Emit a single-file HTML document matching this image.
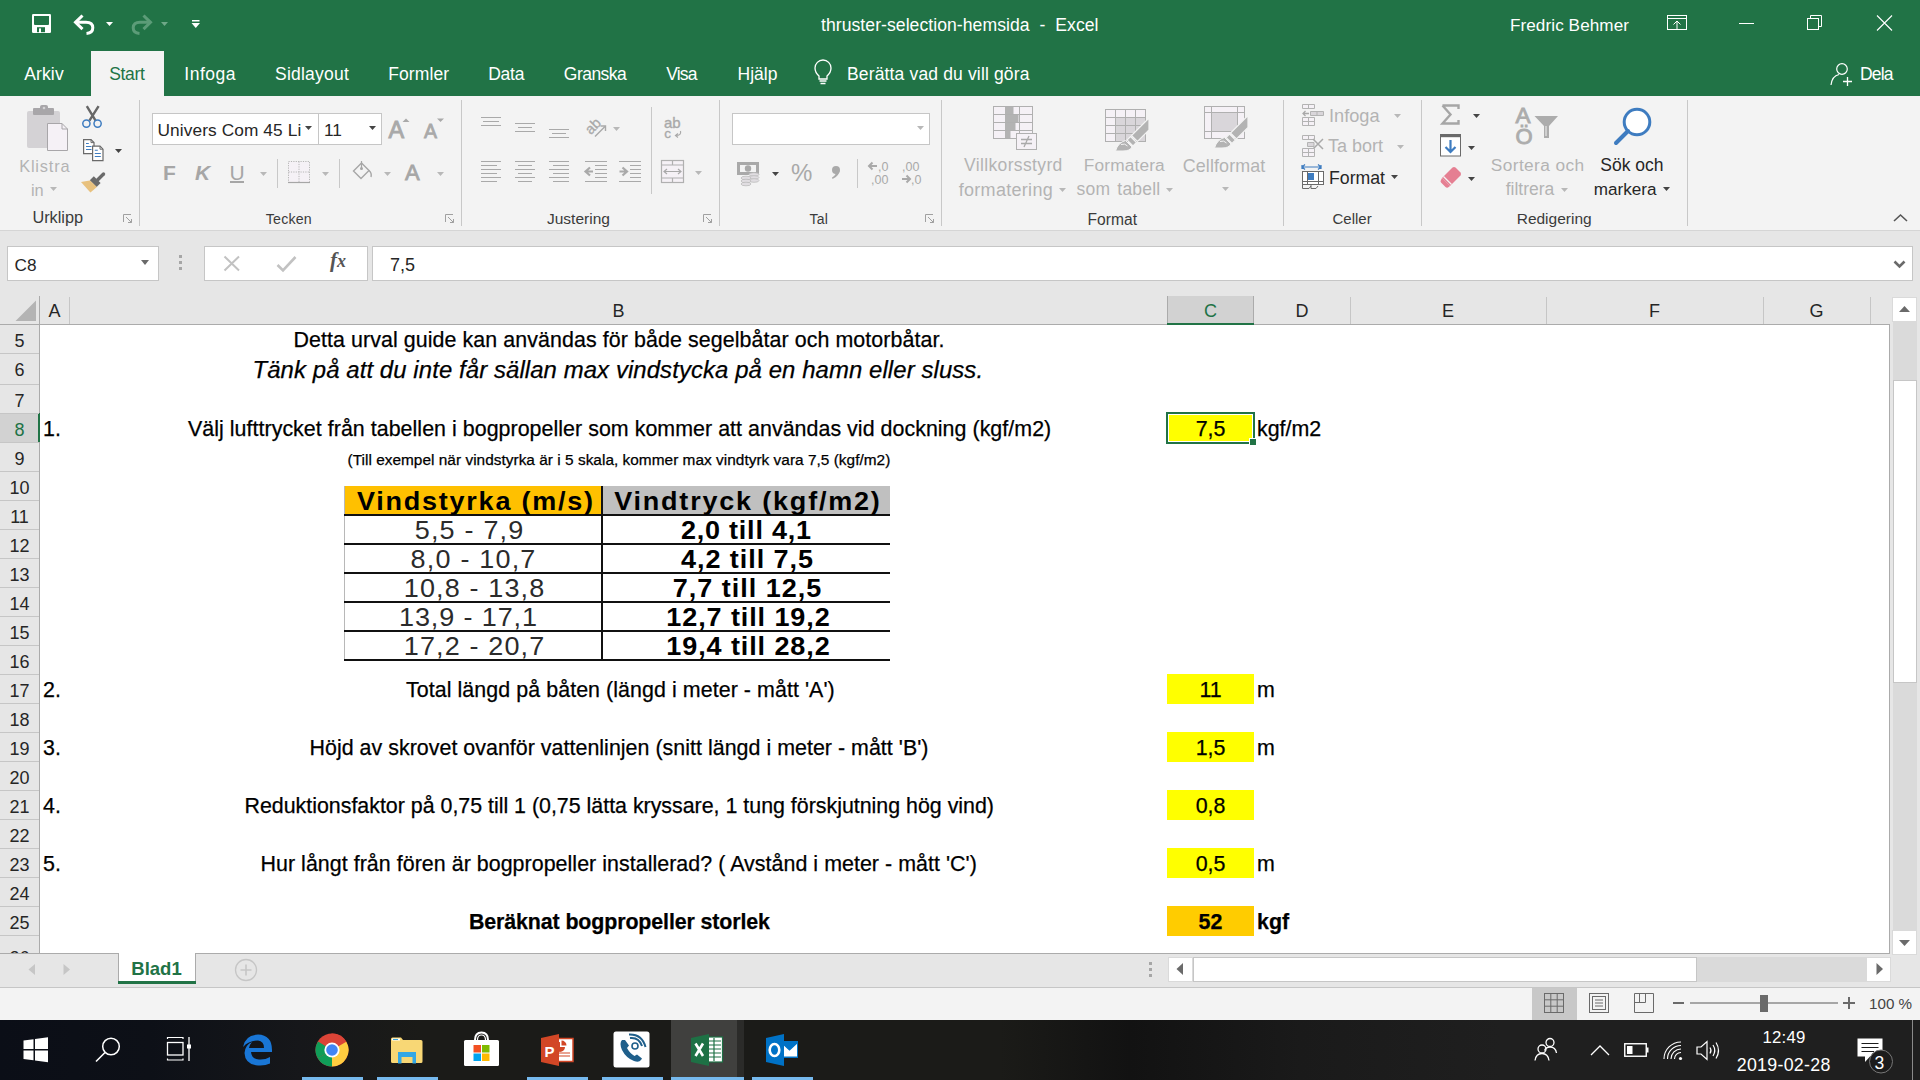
<!DOCTYPE html>
<html><head><meta charset="utf-8">
<style>
*{margin:0;padding:0;box-sizing:border-box}
html,body{width:1920px;height:1080px;overflow:hidden;background:#fff;font-family:"Liberation Sans",sans-serif}
.a{position:absolute}
.t{position:absolute;white-space:nowrap;line-height:1}
svg{position:absolute;overflow:visible}
#title{left:0;top:0;width:1920px;height:96px;background:#217346}
#ribbon{left:0;top:96px;width:1920px;height:134px;background:#f3f3f3}
#rbb{left:0;top:230px;width:1920px;height:1px;background:#d5d5d5}
#fbar{left:0;top:231px;width:1920px;height:65px;background:#e6e6e6}
#colhdr{left:0;top:296px;width:1890px;height:28px;background:#e6e6e6}
#chb{left:0;top:324px;width:1890px;height:1px;background:#ababab}
#rowhdr{left:0;top:325px;width:39px;height:628px;background:#e6e6e6}
#rhb{left:39px;top:296px;width:1px;height:657px;background:#ababab}
#sheet{left:40px;top:325px;width:1849px;height:628px;background:#fff}
#vscroll{left:1889px;top:296px;width:31px;height:692px;background:#e6e6e6}
#tabbar{left:0;top:953px;width:1889px;height:34px;background:#e6e6e6}
#status{left:0;top:988px;width:1920px;height:32px;background:#f3f3f3}
#taskbar{left:0;top:1020px;width:1920px;height:60px;background:linear-gradient(90deg,#0b0e17 0px,#0d1017 150px,#16171a 300px,#1b1b18 420px,#1b1b18 1000px,#121212 1130px,#1a1a1a 1300px,#1f1f1f 1500px,#1f1f1f 1920px)}
.tab{color:#fff;font-size:18px}
.hd{font-size:18px;color:#262626}
.rn{font-size:18px;color:#262626;width:39px;text-align:center}
.cell{font-size:21.4px;color:#000;-webkit-text-stroke:0.25px #000}
.gl{font-size:16px;color:#444}
.dis{color:#b1b1b1}
.blk{color:#262626}
</style></head><body>
<div id="title" class="a"></div>
<div id="ribbon" class="a"></div>
<div id="rbb" class="a"></div>
<div id="fbar" class="a"></div>
<div id="colhdr" class="a"></div>
<div id="chb" class="a"></div>
<div id="rowhdr" class="a"></div>
<div id="sheet" class="a"></div>
<div id="rhb" class="a"></div>
<div id="vscroll" class="a"></div>
<div id="tabbar" class="a"></div>
<div id="status" class="a"></div>
<div id="taskbar" class="a"></div>



<!-- ===== RIBBON ===== -->
<div class="a" style="left:139px;top:100px;width:1px;height:126px;background:#c8c8c8"></div>
<div class="a" style="left:461px;top:100px;width:1px;height:126px;background:#c8c8c8"></div>
<div class="a" style="left:719px;top:100px;width:1px;height:126px;background:#c8c8c8"></div>
<div class="a" style="left:941px;top:100px;width:1px;height:126px;background:#c8c8c8"></div>
<div class="a" style="left:1283px;top:100px;width:1px;height:126px;background:#c8c8c8"></div>
<div class="a" style="left:1421px;top:100px;width:1px;height:126px;background:#c8c8c8"></div>
<div class="a" style="left:1687px;top:100px;width:1px;height:126px;background:#c8c8c8"></div>
<div class="a" style="left:277px;top:159px;width:1px;height:29px;background:#c8c8c8"></div>
<div class="a" style="left:339px;top:159px;width:1px;height:29px;background:#c8c8c8"></div>
<div class="a" style="left:651px;top:107px;width:1px;height:87px;background:#c8c8c8"></div>
<div class="a" style="left:857px;top:159px;width:1px;height:29px;background:#c8c8c8"></div>
<div class="t" style="left:32.4px;top:209.3px;font-size:16.3px;color:#3b3b3b;">Urklipp</div>
<div class="t" style="left:265.8px;top:212.0px;font-size:14.2px;color:#3b3b3b;letter-spacing:0.2px">Tecken</div>
<div class="t" style="left:547px;top:210.9px;font-size:15.5px;color:#3b3b3b;">Justering</div>
<div class="t" style="left:809.4px;top:211.8px;font-size:14px;color:#3b3b3b;letter-spacing:0.3px">Tal</div>
<div class="t" style="left:1087.6px;top:211.9px;font-size:15.6px;color:#3b3b3b;">Format</div>
<div class="t" style="left:1332.5px;top:211.0px;font-size:15px;color:#3b3b3b;">Celler</div>
<div class="t" style="left:1516.7px;top:210.6px;font-size:15.5px;color:#3b3b3b;">Redigering</div>
<svg style="left:123px;top:214px" width="10" height="10"><path d="M0.5 8 V0.5 H8" fill="none" stroke="#a0a0a0" stroke-width="1"/><path d="M3 3 L8.5 8.5 M5 8.5 H8.5 V5" fill="none" stroke="#a0a0a0" stroke-width="1"/></svg>
<svg style="left:445px;top:214px" width="10" height="10"><path d="M0.5 8 V0.5 H8" fill="none" stroke="#a0a0a0" stroke-width="1"/><path d="M3 3 L8.5 8.5 M5 8.5 H8.5 V5" fill="none" stroke="#a0a0a0" stroke-width="1"/></svg>
<svg style="left:703px;top:214px" width="10" height="10"><path d="M0.5 8 V0.5 H8" fill="none" stroke="#a0a0a0" stroke-width="1"/><path d="M3 3 L8.5 8.5 M5 8.5 H8.5 V5" fill="none" stroke="#a0a0a0" stroke-width="1"/></svg>
<svg style="left:925px;top:214px" width="10" height="10"><path d="M0.5 8 V0.5 H8" fill="none" stroke="#a0a0a0" stroke-width="1"/><path d="M3 3 L8.5 8.5 M5 8.5 H8.5 V5" fill="none" stroke="#a0a0a0" stroke-width="1"/></svg>
<svg style="left:1892px;top:212px" width="18" height="12"><path d="M2 9 L8.5 3 L15 9" fill="none" stroke="#555" stroke-width="1.6"/></svg>
<svg style="left:26px;top:105px" width="44" height="48">
<rect x="1" y="6" width="33" height="37" rx="2" fill="#d4d2d5"/>
<rect x="7" y="3" width="21" height="7" rx="1" fill="#a8a6a9"/>
<rect x="14" y="0" width="8" height="5" rx="2" fill="#a8a6a9"/><circle cx="18" cy="3" r="1.3" fill="#d4d2d5"/>
<path d="M21.5 18.5 H36 L41.5 24 V45.5 H21.5 Z" fill="#f5f1f6" stroke="#a8a6a9" stroke-width="1"/>
<path d="M36 18.5 V24 H41.5" fill="none" stroke="#a8a6a9" stroke-width="1"/>
</svg>
<div class="t" style="left:19.2px;top:157.7px;font-size:16.4px;color:#b3b3b3;letter-spacing:0.8px">Klistra</div>
<div class="t" style="left:30.9px;top:181.7px;font-size:16.4px;color:#b3b3b3;">in</div>
<svg style="left:50px;top:187px" width="8" height="5"><path d="M0 0 H7 L3.5 4 Z" fill="#b8b8b8"/></svg>
<svg style="left:76px;top:100px" width="32" height="32">
<path d="M10.8 6.2 L19.6 20.6 M22.6 6.2 L13.4 20.6" stroke="#666" stroke-width="2.4"/>
<circle cx="10.4" cy="23.6" r="3.6" fill="none" stroke="#3e7cc0" stroke-width="1.5"/>
<circle cx="21.6" cy="23.6" r="3.6" fill="none" stroke="#3e7cc0" stroke-width="1.5"/>
</svg>
<svg style="left:76px;top:100px" width="32" height="64">
<path d="M7.6 39.6 H15 L18 42.6 V53.6 H7.6 Z" fill="#fff" stroke="#6a6a6a" stroke-width="1.2"/>
<path d="M15 39.6 V42.6 H18" fill="none" stroke="#6a6a6a" stroke-width="1"/>
<path d="M10 43.5 H12.8 M10 46.5 H15.5 M10 49.5 H15.5" stroke="#3e7cc0" stroke-width="1.1"/>
<path d="M16.6 46.2 H24 L27 49.2 V60.6 H16.6 Z" fill="#fff" stroke="#6a6a6a" stroke-width="1.2"/>
<path d="M24 46.2 V49.2 H27" fill="none" stroke="#6a6a6a" stroke-width="1"/>
<path d="M18.8 50.3 H21.8 M18.8 53.5 H24.8 M18.8 56.5 H24.8" stroke="#3e7cc0" stroke-width="1.1"/>
</svg>
<svg style="left:115px;top:149px" width="8" height="5"><path d="M0 0 H7 L3.5 4 Z" fill="#444"/></svg>
<svg style="left:76px;top:170px" width="32" height="26">
<path d="M22 9.5 L27.5 4" stroke="#6a6a6a" stroke-width="3.4" stroke-linecap="round"/>
<path d="M13.8 10.2 L17.8 6.2 L24.6 13 L20.6 17 Z" fill="#6a6a6a"/>
<path d="M5 12 Q9 11.2 14 10.5 L20.8 17 Q17.5 20 14.4 22.6 Z" fill="#e8c17e"/>
</svg>
<div class="a" style="left:152px;top:113px;width:230px;height:32px;background:#fff;border:1px solid #c6c6c6"></div>
<div class="a" style="left:318px;top:114px;width:1px;height:30px;background:#c6c6c6"></div>
<div class="t" style="left:157.5px;top:122.4px;font-size:17.3px;color:#262626;letter-spacing:0.1px">Univers Com 45 Li</div>
<div class="t" style="left:324.0px;top:122.4px;font-size:17.3px;color:#262626;">11</div>
<svg style="left:305px;top:126px" width="8" height="5"><path d="M0 0 H7 L3.5 4 Z" fill="#444"/></svg>
<svg style="left:369px;top:126px" width="8" height="5"><path d="M0 0 H7 L3.5 4 Z" fill="#444"/></svg>
<svg style="left:388px;top:116px" width="60" height="24">
<text x="0.5" y="21.6" font-family="Liberation Sans" font-size="23.5" fill="#a9a9a9" stroke="#a9a9a9" stroke-width="0.9">A</text>
<path d="M14.5 6 L18 2.5 L21.5 6 Z" fill="#a9a9a9"/>
<text x="36" y="21.6" font-family="Liberation Sans" font-size="19.5" fill="#a9a9a9" stroke="#a9a9a9" stroke-width="0.8">A</text>
<path d="M49 2.5 H56 L52.5 6 Z" fill="#a9a9a9"/>
</svg>
<div class="t" style="left:163px;top:162.2px;font-size:21px;color:#a6a6a6;font-weight:bold">F</div>
<div class="t" style="left:195px;top:162.2px;font-size:21px;color:#a6a6a6;font-weight:bold;font-style:italic">K</div>
<div class="t" style="left:229.5px;top:162.2px;font-size:21px;color:#a6a6a6;">U</div>
<div class="a" style="left:230px;top:181px;width:14px;height:1.5px;background:#a6a6a6"></div>
<svg style="left:260px;top:172px" width="8" height="5"><path d="M0 0 H7 L3.5 4 Z" fill="#b8b8b8"/></svg>
<svg style="left:322px;top:172px" width="8" height="5"><path d="M0 0 H7 L3.5 4 Z" fill="#b8b8b8"/></svg>
<svg style="left:384px;top:172px" width="8" height="5"><path d="M0 0 H7 L3.5 4 Z" fill="#b8b8b8"/></svg>
<svg style="left:437px;top:172px" width="8" height="5"><path d="M0 0 H7 L3.5 4 Z" fill="#b8b8b8"/></svg>
<svg style="left:288px;top:161px" width="22" height="22">
<rect x="0.5" y="0.5" width="21" height="21" fill="#f5f1f6" stroke="#b6b6b6" stroke-width="1" stroke-dasharray="1.2 1.2"/>
<path d="M11 0.5 V21.5 M0.5 11 H21.5" stroke="#b6b6b6" stroke-width="1" stroke-dasharray="1.2 1.2"/>
<path d="M0 21.5 H22" stroke="#a6a6a6" stroke-width="1.2"/>
</svg>
<svg style="left:352px;top:160px" width="21" height="21">
<path d="M9.5 3 L17 10.5 L9 18.5 L1.5 11 Z" fill="none" stroke="#a6a6a6" stroke-width="1.4"/>
<path d="M9.5 1 V8" stroke="#a6a6a6" stroke-width="1.2"/><circle cx="9.5" cy="8.5" r="1.5" fill="#a6a6a6"/>
<path d="M17 10.5 Q20 13 19 17" fill="none" stroke="#a6a6a6" stroke-width="1.4"/>
</svg>
<div class="t" style="left:405px;top:161.6px;font-size:22px;color:#a6a6a6;-webkit-text-stroke:0.8px #a6a6a6">A</div>
<div class="a" style="left:481px;top:117px;width:20px;height:1px;background:#a9a9a9"></div>
<div class="a" style="left:483px;top:121px;width:16px;height:1px;background:#a9a9a9"></div>
<div class="a" style="left:481px;top:125px;width:20px;height:1px;background:#a9a9a9"></div>
<div class="a" style="left:515px;top:123px;width:20px;height:1px;background:#a9a9a9"></div>
<div class="a" style="left:518px;top:127px;width:14px;height:1px;background:#a9a9a9"></div>
<div class="a" style="left:515px;top:131px;width:20px;height:1px;background:#a9a9a9"></div>
<div class="a" style="left:549px;top:129px;width:20px;height:1px;background:#a9a9a9"></div>
<div class="a" style="left:552px;top:133px;width:14px;height:1px;background:#a9a9a9"></div>
<div class="a" style="left:549px;top:137px;width:20px;height:1px;background:#a9a9a9"></div>
<div class="a" style="left:481px;top:161px;width:20px;height:1px;background:#a9a9a9"></div>
<div class="a" style="left:481px;top:165px;width:16px;height:1px;background:#a9a9a9"></div>
<div class="a" style="left:481px;top:169px;width:20px;height:1px;background:#a9a9a9"></div>
<div class="a" style="left:481px;top:173px;width:16px;height:1px;background:#a9a9a9"></div>
<div class="a" style="left:481px;top:177px;width:20px;height:1px;background:#a9a9a9"></div>
<div class="a" style="left:481px;top:181px;width:16px;height:1px;background:#a9a9a9"></div>
<div class="a" style="left:515px;top:161px;width:20px;height:1px;background:#a9a9a9"></div>
<div class="a" style="left:518px;top:165px;width:14px;height:1px;background:#a9a9a9"></div>
<div class="a" style="left:515px;top:169px;width:20px;height:1px;background:#a9a9a9"></div>
<div class="a" style="left:518px;top:173px;width:14px;height:1px;background:#a9a9a9"></div>
<div class="a" style="left:515px;top:177px;width:20px;height:1px;background:#a9a9a9"></div>
<div class="a" style="left:518px;top:181px;width:14px;height:1px;background:#a9a9a9"></div>
<div class="a" style="left:549px;top:161px;width:20px;height:1px;background:#a9a9a9"></div>
<div class="a" style="left:553px;top:165px;width:16px;height:1px;background:#a9a9a9"></div>
<div class="a" style="left:549px;top:169px;width:20px;height:1px;background:#a9a9a9"></div>
<div class="a" style="left:553px;top:173px;width:16px;height:1px;background:#a9a9a9"></div>
<div class="a" style="left:549px;top:177px;width:20px;height:1px;background:#a9a9a9"></div>
<div class="a" style="left:553px;top:181px;width:16px;height:1px;background:#a9a9a9"></div>
<div class="a" style="left:585px;top:161px;width:22px;height:1px;background:#a9a9a9"></div>
<div class="a" style="left:595px;top:165px;width:12px;height:1px;background:#a9a9a9"></div>
<div class="a" style="left:595px;top:169px;width:12px;height:1px;background:#a9a9a9"></div>
<div class="a" style="left:595px;top:173px;width:12px;height:1px;background:#a9a9a9"></div>
<div class="a" style="left:595px;top:177px;width:12px;height:1px;background:#a9a9a9"></div>
<div class="a" style="left:585px;top:181px;width:22px;height:1px;background:#a9a9a9"></div>
<div class="a" style="left:619px;top:161px;width:22px;height:1px;background:#a9a9a9"></div>
<div class="a" style="left:630px;top:165px;width:11px;height:1px;background:#a9a9a9"></div>
<div class="a" style="left:630px;top:169px;width:11px;height:1px;background:#a9a9a9"></div>
<div class="a" style="left:630px;top:173px;width:11px;height:1px;background:#a9a9a9"></div>
<div class="a" style="left:630px;top:177px;width:11px;height:1px;background:#a9a9a9"></div>
<div class="a" style="left:619px;top:181px;width:22px;height:1px;background:#a9a9a9"></div>
<svg style="left:584px;top:166px" width="10" height="12"><path d="M9 5.5 H3 M6 1.5 L1.5 5.5 L6 9.5" fill="none" stroke="#a9a9a9" stroke-width="2.2"/></svg>
<svg style="left:619px;top:166px" width="10" height="12"><path d="M0.5 5.5 H6.5 M3.5 1.5 L8 5.5 L3.5 9.5" fill="none" stroke="#a9a9a9" stroke-width="2.2"/></svg>
<svg style="left:583px;top:115px" width="28" height="26">
<text x="-8.5" y="4.5" font-family="Liberation Sans" font-size="14.5" fill="#a9a9a9" stroke="#a9a9a9" stroke-width="0.3" transform="translate(10.5 11) rotate(-45)">ab</text>
<path d="M12 21.5 L22 11.5" stroke="#a9a9a9" stroke-width="1.4"/><path d="M17.5 11 H22.5 V16" fill="none" stroke="#a9a9a9" stroke-width="1.4"/>
</svg>
<svg style="left:613px;top:127px" width="8" height="5"><path d="M0 0 H7 L3.5 4 Z" fill="#b8b8b8"/></svg>
<svg style="left:664px;top:116px" width="20" height="24">
<text x="0" y="12" font-family="Liberation Sans" font-size="15" fill="#a9a9a9" stroke="#a9a9a9" stroke-width="0.35">ab</text>
<text x="0.3" y="22" font-family="Liberation Sans" font-size="13.5" fill="#a9a9a9" stroke="#a9a9a9" stroke-width="0.35">c</text>
<path d="M16.5 15 Q17.5 19.5 12 19.5 M14 17.5 L11.5 19.5 L14 21.5" fill="none" stroke="#a9a9a9" stroke-width="1.2"/>
</svg>
<svg style="left:660px;top:159px" width="26" height="25">
<rect x="1.5" y="1.5" width="22" height="22" fill="#f5f1f6" stroke="#b0b0b0" stroke-width="1.2"/>
<path d="M1.5 6 H23.5 M1.5 19 H23.5 M12.5 1.5 V6 M12.5 19 V23.5" stroke="#b0b0b0" stroke-width="1.2"/>
<path d="M4 12.5 H21 M7 10 L4 12.5 L7 15 M18 10 L21 12.5 L18 15" fill="none" stroke="#a9a9a9" stroke-width="1.2"/>
</svg>
<svg style="left:695px;top:171px" width="8" height="5"><path d="M0 0 H7 L3.5 4 Z" fill="#b8b8b8"/></svg>
<div class="a" style="left:732px;top:113px;width:198px;height:32px;background:#fff;border:1px solid #c6c6c6"></div>
<svg style="left:917px;top:126px" width="8" height="5"><path d="M0 0 H7 L3.5 4 Z" fill="#b8b8b8"/></svg>
<svg style="left:736px;top:161px" width="26" height="25">
<rect x="1" y="1" width="22" height="13" fill="#a9a9a9"/><rect x="4" y="4" width="16" height="7" fill="#f3f3f3"/>
<circle cx="12" cy="7.5" r="3.2" fill="#a9a9a9"/>
<ellipse cx="18" cy="13.5" rx="5" ry="1.8" fill="#e0dde1" stroke="#bdbdbd" stroke-width="0.8"/>
<ellipse cx="18" cy="16.5" rx="5" ry="1.8" fill="#e0dde1" stroke="#bdbdbd" stroke-width="0.8"/>
<ellipse cx="18" cy="19.5" rx="5" ry="1.8" fill="#e0dde1" stroke="#bdbdbd" stroke-width="0.8"/>
<ellipse cx="10" cy="17" rx="5" ry="1.8" fill="#e0dde1" stroke="#bdbdbd" stroke-width="0.8"/>
<ellipse cx="10" cy="20" rx="5" ry="1.8" fill="#e0dde1" stroke="#bdbdbd" stroke-width="0.8"/>
<ellipse cx="10" cy="23" rx="5" ry="1.8" fill="#e0dde1" stroke="#bdbdbd" stroke-width="0.8"/>
</svg>
<svg style="left:772px;top:172px" width="8" height="5"><path d="M0 0 H7 L3.5 4 Z" fill="#444"/></svg>
<div class="t" style="left:791px;top:161.3px;font-size:24px;color:#a9a9a9;">%</div>
<svg style="left:830px;top:165px" width="12" height="15"><circle cx="6" cy="5" r="4" fill="#a9a9a9"/><path d="M9.5 5 Q9.5 11 2.5 14 L2 12.5 Q6 10 6 7 Z" fill="#a9a9a9"/></svg>
<svg style="left:867px;top:161px" width="60" height="26">
<path d="M10 5 H2 M5.5 1.5 L2 5 L5.5 8.5" fill="none" stroke="#a9a9a9" stroke-width="2"/>
<text x="11" y="10" font-family="Liberation Sans" font-size="12.5" fill="#a9a9a9">,0</text>
<text x="4" y="22.5" font-family="Liberation Sans" font-size="12.5" fill="#a9a9a9">,00</text>
<text x="35" y="10" font-family="Liberation Sans" font-size="12.5" fill="#a9a9a9">,00</text>
<path d="M35 18 H43 M39.5 14.5 L43 18 L39.5 21.5" fill="none" stroke="#a9a9a9" stroke-width="2"/>
<text x="44" y="22.5" font-family="Liberation Sans" font-size="12.5" fill="#a9a9a9">,0</text>
</svg>
<svg style="left:992px;top:105px" width="48" height="46">
<rect x="1.5" y="1.5" width="39" height="32" fill="#f5f1f6" stroke="#b0b0b0" stroke-width="1"/>
<rect x="13" y="2" width="8.5" height="7" fill="#b3b3b3"/><rect x="13" y="10" width="13.5" height="7" fill="#b3b3b3"/>
<rect x="13" y="18" width="10.5" height="7" fill="#b3b3b3"/><rect x="13" y="26" width="5.5" height="7" fill="#b3b3b3"/>
<path d="M1.5 9.5 H40.5 M1.5 17.5 H40.5 M1.5 25.5 H40.5 M27.5 1.5 V33.5" stroke="#b0b0b0" stroke-width="1"/>
<rect x="24.5" y="28.5" width="20" height="16" fill="#f5f1f6" stroke="#b0b0b0" stroke-width="1"/>
<path d="M29 34.5 H40 M29 38.5 H40 M37 31 L32 42" stroke="#a9a9a9" stroke-width="1.3"/>
</svg>
<div class="t" style="left:964.1px;top:156.8px;font-size:17.5px;color:#b3b3b3;letter-spacing:0.35px">Villkorsstyrd</div>
<div class="t" style="left:958.7px;top:180.7px;font-size:18px;color:#b3b3b3;letter-spacing:0.3px">formatering</div>
<svg style="left:1059px;top:188px" width="8" height="5"><path d="M0 0 H7 L3.5 4 Z" fill="#b8b8b8"/></svg>
<svg style="left:1104px;top:107px" width="47" height="45">
<rect x="1.5" y="2.5" width="40" height="32" fill="#f5f1f6" stroke="#b0b0b0" stroke-width="1"/>
<rect x="12" y="10" width="29" height="24" fill="#d9d6da"/>
<path d="M1.5 10.5 H41.5 M1.5 18.5 H41.5 M1.5 26.5 H41.5 M11.5 2.5 V34.5 M21.5 2.5 V34.5 M31.5 2.5 V34.5" stroke="#b0b0b0" stroke-width="1"/>
<path d="M45 11 V23 L33.5 34.5 L27.5 28.5 Z" fill="#b3b3b3" stroke="#f3f3f3" stroke-width="1.2"/>
<path d="M26.5 29.5 L32.5 35.5 L29 39 L23 33 Z" fill="#b3b3b3" stroke="#f3f3f3" stroke-width="1.2"/>
<path d="M11.5 44 Q14 35.5 21.5 33.5 L28 40 Q26 44 19 44 Z" fill="#b3b3b3" stroke="#f3f3f3" stroke-width="1"/>
<path d="M17 37.5 Q21 36 23.5 39" fill="none" stroke="#f3f3f3" stroke-width="1"/>
</svg>
<div class="t" style="left:1083.8px;top:157.0px;font-size:17.3px;color:#b3b3b3;letter-spacing:0.15px">Formatera</div>
<div class="t" style="left:1076.6px;top:181.1px;font-size:17.5px;color:#b3b3b3;word-spacing:2px;letter-spacing:0.2px">som tabell</div>
<svg style="left:1166px;top:188px" width="8" height="5"><path d="M0 0 H7 L3.5 4 Z" fill="#b8b8b8"/></svg>
<svg style="left:1203px;top:105px" width="47" height="45">
<rect x="1.5" y="1.5" width="40" height="32" fill="#f5f1f6" stroke="#b0b0b0" stroke-width="1"/>
<path d="M1.5 7.5 H41.5 M1.5 26.5 H41.5 M8.5 1.5 V33.5 M34.5 1.5 V33.5" stroke="#b0b0b0" stroke-width="1"/>
<rect x="9" y="8" width="25" height="18" fill="#d9d6da"/>
<path d="M45 10.5 V22.5 L33.5 34 L27.5 28 Z" fill="#b3b3b3" stroke="#f3f3f3" stroke-width="1.2"/>
<path d="M26.5 29 L32.5 35 L29 38.5 L23 32.5 Z" fill="#b3b3b3" stroke="#f3f3f3" stroke-width="1.2"/>
<path d="M11.5 43 Q14 34.5 21.5 32.5 L28 39 Q26 43 19 43 Z" fill="#b3b3b3" stroke="#f3f3f3" stroke-width="1"/>
<path d="M17 36.5 Q21 35 23.5 38" fill="none" stroke="#f3f3f3" stroke-width="1"/>
</svg>
<div class="t" style="left:1182.8px;top:157.9px;font-size:17.9px;color:#b3b3b3;letter-spacing:0.1px">Cellformat</div>
<svg style="left:1222px;top:187px" width="8" height="5"><path d="M0 0 H7 L3.5 4 Z" fill="#b8b8b8"/></svg>
<svg style="left:1301px;top:103px" width="25" height="24">
<path d="M1.5 1.5 H13.5 V5.5 H1.5 Z M7.5 1.5 V5.5" fill="#f5f1f6" stroke="#b3b3b3" stroke-width="1"/>
<path d="M9.5 8.5 H22.5 V12.5 H9.5 Z M16 8.5 V12.5" fill="#d9d6da" stroke="#b3b3b3" stroke-width="1"/>
<path d="M8 10.5 H2 M4.5 8 L2 10.5 L4.5 13" fill="none" stroke="#a9a9a9" stroke-width="1.3"/>
<path d="M1.5 14.5 H13.5 V22.5 H1.5 Z M1.5 18.5 H13.5 M7.5 14.5 V22.5" fill="#f5f1f6" stroke="#b3b3b3" stroke-width="1"/>
</svg>
<div class="t" style="left:1329px;top:106.6px;font-size:18.2px;color:#b3b3b3;">Infoga</div>
<svg style="left:1394px;top:114px" width="8" height="5"><path d="M0 0 H7 L3.5 4 Z" fill="#b8b8b8"/></svg>
<svg style="left:1301px;top:134px" width="25" height="24">
<path d="M1.5 1.5 H13.5 V5.5 H1.5 Z M7.5 1.5 V5.5" fill="#f5f1f6" stroke="#b3b3b3" stroke-width="1"/>
<path d="M6.5 8.5 H13 V12.5 H6.5 Z" fill="#d9d6da" stroke="#b3b3b3" stroke-width="1"/>
<path d="M12 5 L22 15 M22 5 L12 15" stroke="#a9a9a9" stroke-width="1.5"/>
<path d="M1.5 14.5 H13.5 V22.5 H1.5 Z M1.5 18.5 H13.5 M7.5 14.5 V22.5" fill="#f5f1f6" stroke="#b3b3b3" stroke-width="1"/>
</svg>
<div class="t" style="left:1328px;top:137.4px;font-size:18px;color:#b3b3b3;">Ta bort</div>
<svg style="left:1397px;top:145px" width="8" height="5"><path d="M0 0 H7 L3.5 4 Z" fill="#b8b8b8"/></svg>
<svg style="left:1301px;top:164px" width="25" height="26">
<path d="M1 1 V5 M1 3 H20 M20 1 V5 M4 0.5 L1 3 L4 5.5 M17 0.5 L20 3 L17 5.5" fill="none" stroke="#3e7cc0" stroke-width="1.2"/>
<rect x="1.5" y="7.5" width="21" height="13" fill="#fff" stroke="#6a6a6a" stroke-width="1"/>
<path d="M6.5 7.5 V20.5 M17.5 7.5 V20.5 M1.5 17.5 H22.5" stroke="#6a6a6a" stroke-width="1"/>
<rect x="7" y="9" width="6" height="7" fill="#3e7cc0"/>
<path d="M1.5 20.5 V24.5 H8 L10 22 M10 20.5 V24.5 H15 L17 22" fill="none" stroke="#6a6a6a" stroke-width="1"/>
</svg>
<div class="t" style="left:1329px;top:169.9px;font-size:17.7px;color:#262626;">Format</div>
<svg style="left:1391px;top:175px" width="8" height="5"><path d="M0 0 H7 L3.5 4 Z" fill="#444"/></svg>
<svg style="left:1441px;top:104px" width="20" height="21"><path d="M1.5 1.5 H17.5 V5 M1.5 1.5 L9.5 10.5 L1.5 19.5 H17.5 V16" fill="none" stroke="#a6a6a6" stroke-width="2.4" stroke-linejoin="miter"/></svg>
<svg style="left:1473px;top:114px" width="8" height="5"><path d="M0 0 H7 L3.5 4 Z" fill="#444"/></svg>
<svg style="left:1440px;top:134px" width="22" height="24">
<rect x="0.5" y="2.5" width="20" height="19.5" fill="#fff" stroke="#6a6a6a" stroke-width="1"/>
<rect x="0" y="0" width="21" height="3.2" fill="#6a6a6a"/>
<path d="M10.5 6 V18 M5.5 13 L10.5 18 L15.5 13" fill="none" stroke="#3e7cc0" stroke-width="2.2"/>
</svg>
<svg style="left:1468px;top:146px" width="8" height="5"><path d="M0 0 H7 L3.5 4 Z" fill="#444"/></svg>
<svg style="left:1440px;top:166px" width="23" height="22">
<path d="M12.5 1.5 Q14 0.5 15.5 1.5 L20.5 6.5 Q21.5 8 20.5 9.5 L10 20 L2 12 Z" fill="#e57f92"/>
<path d="M2 12 L10 20 L8 21.5 Q6.5 22 5.5 21 L1 16.5 Q0 15 1 14 Z" fill="#e57f92"/>
<path d="M3.5 10.5 L11.5 18.5" stroke="#f3f3f3" stroke-width="1.2"/>
</svg>
<svg style="left:1468px;top:177px" width="8" height="5"><path d="M0 0 H7 L3.5 4 Z" fill="#444"/></svg>
<svg style="left:1514px;top:104px" width="48" height="44">
<text x="1.5" y="18.6" font-family="Liberation Sans" font-size="22.5" fill="#acacac" stroke="#acacac" stroke-width="0.9">A</text>
<text x="1.5" y="40.4" font-family="Liberation Sans" font-size="22" fill="#acacac" stroke="#acacac" stroke-width="0.9">Ö</text>
<path d="M20.5 12 H44 L35 22 V34 H30 V22 Z" fill="#acacac"/><path d="M32 22 V32" stroke="#f3f3f3" stroke-width="1"/>
</svg>
<div class="t" style="left:1490.8px;top:157.0px;font-size:17.3px;color:#b3b3b3;letter-spacing:0.4px">Sortera och</div>
<div class="t" style="left:1505.7px;top:180.8px;font-size:17.5px;color:#b3b3b3;">filtrera</div>
<svg style="left:1561px;top:188px" width="8" height="5"><path d="M0 0 H7 L3.5 4 Z" fill="#b8b8b8"/></svg>
<svg style="left:1612px;top:106px" width="42" height="42">
<circle cx="25" cy="16" r="12.8" fill="#fff" stroke="#3e7cc0" stroke-width="3"/>
<path d="M16 25 L4 37" stroke="#3e7cc0" stroke-width="4" stroke-linecap="round"/>
</svg>
<div class="t" style="left:1600.3px;top:156.8px;font-size:17.5px;color:#262626;">Sök och</div>
<div class="t" style="left:1593.8px;top:181.1px;font-size:17.1px;color:#262626;">markera</div>
<svg style="left:1663px;top:187px" width="8" height="5"><path d="M0 0 H7 L3.5 4 Z" fill="#444"/></svg>
<!-- ===== HEADERS ===== -->
<svg style="left:0;top:296px" width="39" height="28"><path d="M15.5 25 L36 25 L36 4.5 Z" fill="#b4b4b4"/></svg>
<div class="a" style="left:69px;top:297px;width:1px;height:27px;background:#c6c6c6"></div>
<div class="a" style="left:1870px;top:297px;width:1px;height:27px;background:#c6c6c6"></div>
<div class="a" style="left:1350px;top:297px;width:1px;height:27px;background:#c6c6c6"></div>
<div class="a" style="left:1546px;top:297px;width:1px;height:27px;background:#c6c6c6"></div>
<div class="a" style="left:1763px;top:297px;width:1px;height:27px;background:#c6c6c6"></div>
<div class="a" style="left:1167px;top:296px;width:87px;height:28px;background:#d2d2d2;border-left:1px solid #ababab;border-right:1px solid #ababab"></div>
<div class="a" style="left:1167px;top:323px;width:87px;height:2px;background:#217346"></div>
<div class="t hd" style="left:39px;width:31px;text-align:center;top:302px;color:#262626">A</div>
<div class="t hd" style="left:70px;width:1097px;text-align:center;top:302px;color:#262626">B</div>
<div class="t hd" style="left:1167px;width:87px;text-align:center;top:302px;color:#217346">C</div>
<div class="t hd" style="left:1254px;width:96px;text-align:center;top:302px;color:#262626">D</div>
<div class="t hd" style="left:1350px;width:196px;text-align:center;top:302px;color:#262626">E</div>
<div class="t hd" style="left:1546px;width:217px;text-align:center;top:302px;color:#262626">F</div>
<div class="t hd" style="left:1763px;width:107px;text-align:center;top:302px;color:#262626">G</div>
<div class="t rn" style="left:0;top:332px;color:#262626">5</div>
<div class="a" style="left:0;top:353px;width:39px;height:1px;background:#c6c6c6"></div>
<div class="t rn" style="left:0;top:361px;color:#262626">6</div>
<div class="a" style="left:0;top:384px;width:39px;height:1px;background:#c6c6c6"></div>
<div class="t rn" style="left:0;top:392px;color:#262626">7</div>
<div class="a" style="left:0;top:413px;width:39px;height:29px;background:#d2d2d2"></div>
<div class="a" style="left:38px;top:413px;width:2px;height:29px;background:#217346"></div>
<div class="a" style="left:0;top:413px;width:39px;height:1px;background:#c6c6c6"></div>
<div class="t rn" style="left:0;top:421px;color:#217346">8</div>
<div class="a" style="left:0;top:442px;width:39px;height:1px;background:#c6c6c6"></div>
<div class="t rn" style="left:0;top:450px;color:#262626">9</div>
<div class="a" style="left:0;top:471px;width:39px;height:1px;background:#c6c6c6"></div>
<div class="t rn" style="left:0;top:479px;color:#262626">10</div>
<div class="a" style="left:0;top:500px;width:39px;height:1px;background:#c6c6c6"></div>
<div class="t rn" style="left:0;top:508px;color:#262626">11</div>
<div class="a" style="left:0;top:529px;width:39px;height:1px;background:#c6c6c6"></div>
<div class="t rn" style="left:0;top:537px;color:#262626">12</div>
<div class="a" style="left:0;top:558px;width:39px;height:1px;background:#c6c6c6"></div>
<div class="t rn" style="left:0;top:566px;color:#262626">13</div>
<div class="a" style="left:0;top:587px;width:39px;height:1px;background:#c6c6c6"></div>
<div class="t rn" style="left:0;top:595px;color:#262626">14</div>
<div class="a" style="left:0;top:616px;width:39px;height:1px;background:#c6c6c6"></div>
<div class="t rn" style="left:0;top:624px;color:#262626">15</div>
<div class="a" style="left:0;top:645px;width:39px;height:1px;background:#c6c6c6"></div>
<div class="t rn" style="left:0;top:653px;color:#262626">16</div>
<div class="a" style="left:0;top:674px;width:39px;height:1px;background:#c6c6c6"></div>
<div class="t rn" style="left:0;top:682px;color:#262626">17</div>
<div class="a" style="left:0;top:703px;width:39px;height:1px;background:#c6c6c6"></div>
<div class="t rn" style="left:0;top:711px;color:#262626">18</div>
<div class="a" style="left:0;top:732px;width:39px;height:1px;background:#c6c6c6"></div>
<div class="t rn" style="left:0;top:740px;color:#262626">19</div>
<div class="a" style="left:0;top:761px;width:39px;height:1px;background:#c6c6c6"></div>
<div class="t rn" style="left:0;top:769px;color:#262626">20</div>
<div class="a" style="left:0;top:790px;width:39px;height:1px;background:#c6c6c6"></div>
<div class="t rn" style="left:0;top:798px;color:#262626">21</div>
<div class="a" style="left:0;top:819px;width:39px;height:1px;background:#c6c6c6"></div>
<div class="t rn" style="left:0;top:827px;color:#262626">22</div>
<div class="a" style="left:0;top:848px;width:39px;height:1px;background:#c6c6c6"></div>
<div class="t rn" style="left:0;top:856px;color:#262626">23</div>
<div class="a" style="left:0;top:877px;width:39px;height:1px;background:#c6c6c6"></div>
<div class="t rn" style="left:0;top:885px;color:#262626">24</div>
<div class="a" style="left:0;top:906px;width:39px;height:1px;background:#c6c6c6"></div>
<div class="t rn" style="left:0;top:914px;color:#262626">25</div>
<div class="a" style="left:0;top:935px;width:39px;height:1px;background:#c6c6c6"></div>
<div class="t rn" style="left:0;top:948.5px;color:#262626">26</div>
<!-- ===== TITLE BAR ===== -->
<div class="t" style="left:821px;top:16.6px;font-size:17.6px;color:#fff;letter-spacing:0.05px">thruster-selection-hemsida&nbsp; - &nbsp;Excel</div>
<div class="t" style="left:1509.9px;top:16.8px;font-size:17.1px;color:#fff;letter-spacing:0.1px">Fredric Behmer</div>

<svg style="left:32px;top:14px" width="20" height="20">
<path d="M1.2 0 H17.8 Q19 0 19 1.2 V17.8 Q19 19 17.8 19 H1.2 Q0 19 0 17.8 V1.2 Q0 0 1.2 0 Z" fill="#fff"/>
<path d="M2 2 H17 V10 Q17 11 16 11 H3 Q2 11 2 10 Z" fill="#217346"/>
<rect x="5" y="13.2" width="8" height="5" fill="#217346"/><rect x="7" y="14.4" width="2" height="4.6" fill="#fff"/>
</svg>
<svg style="left:72px;top:14px" width="26" height="22">
<path d="M4 8.3 H14 Q20.8 8.3 20.8 13.8 Q20.8 19 14.5 19.5" fill="none" stroke="#fff" stroke-width="3"/>
<path d="M10.5 1.5 L3.5 8.3 L10.5 15.1" fill="none" stroke="#fff" stroke-width="3" stroke-linejoin="miter"/>
</svg>
<svg style="left:106px;top:22px" width="8" height="5"><path d="M0 0 H7 L3.5 4 Z" fill="#fff"/></svg>
<svg style="left:128px;top:14px" width="26" height="22">
<path d="M22 8.3 H12 Q5.2 8.3 5.2 13.8 Q5.2 19 11.5 19.5" fill="none" stroke="#5c9c78" stroke-width="3"/>
<path d="M15.5 1.5 L22.5 8.3 L15.5 15.1" fill="none" stroke="#5c9c78" stroke-width="3"/>
</svg>
<svg style="left:161px;top:22px" width="8" height="5"><path d="M0 0 H7 L3.5 4 Z" fill="#6fa888"/></svg>
<svg style="left:191px;top:20px" width="10" height="9"><path d="M1 0.75 H8.5" stroke="#fff" stroke-width="1.5"/><path d="M0.5 3 H9 L4.75 8 Z" fill="#fff"/></svg>
<svg style="left:1667px;top:15px" width="21" height="16">
<rect x="0.5" y="0.5" width="19" height="14" fill="none" stroke="#fff" stroke-width="1"/>
<path d="M0.5 3.5 H19.5" stroke="#fff" stroke-width="1"/>
<path d="M10 14 V6 M6.5 9.5 L10 6 L13.5 9.5" fill="none" stroke="#fff" stroke-width="1"/>
</svg>
<div class="a" style="left:1739px;top:23px;width:15px;height:1px;background:#fff"></div>
<svg style="left:1807px;top:15px" width="17" height="16">
<rect x="0.5" y="3.5" width="11" height="11" fill="none" stroke="#fff" stroke-width="1"/>
<path d="M3.5 3.5 V0.5 H14.5 V11.5 H11.5" fill="none" stroke="#fff" stroke-width="1"/>
</svg>
<svg style="left:1876px;top:15px" width="17" height="16"><path d="M1 0.5 L16 15.5 M16 0.5 L1 15.5" stroke="#fff" stroke-width="1.1"/></svg>
<svg style="left:813px;top:59px" width="20" height="27">
<path d="M6 17 Q2 13.5 2 9 A8 8 0 0 1 18 9 Q18 13.5 14 17 V20 H6 Z" fill="none" stroke="#fff" stroke-width="1.3"/>
<path d="M6.5 22 H13.5 M7.5 24.5 H12.5" stroke="#fff" stroke-width="1.5"/>
</svg>
<svg style="left:1830px;top:62px" width="24" height="25">
<circle cx="12" cy="7" r="5.3" fill="none" stroke="#fff" stroke-width="1.2"/>
<path d="M1 23 Q2 14 9 12.5" fill="none" stroke="#fff" stroke-width="1.2"/>
<path d="M17.5 15 V24 M13 19.5 H22" stroke="#fff" stroke-width="1.3"/>
</svg>
<!-- ===== TABS ===== -->
<div class="a" style="left:91px;top:51px;width:73px;height:45px;background:#f3f3f3"></div>
<div class="t tab" style="left:24.2px;top:65.7px;font-size:17.5px;letter-spacing:0.14px">Arkiv</div>
<div class="t tab" style="left:109.2px;top:65.7px;font-size:17.5px;letter-spacing:-0.30px;color:#217346">Start</div>
<div class="t tab" style="left:184.25px;top:65.7px;font-size:17.5px;letter-spacing:0.52px">Infoga</div>
<div class="t tab" style="left:275.0px;top:65.7px;font-size:17.5px;letter-spacing:0.22px">Sidlayout</div>
<div class="t tab" style="left:388.2px;top:65.7px;font-size:17.5px;letter-spacing:0.12px">Formler</div>
<div class="t tab" style="left:488.2px;top:65.7px;font-size:17.5px;letter-spacing:-0.24px">Data</div>
<div class="t tab" style="left:563.8px;top:65.7px;font-size:17.5px;letter-spacing:-0.53px">Granska</div>
<div class="t tab" style="left:666.2px;top:65.7px;font-size:17.5px;letter-spacing:-0.81px">Visa</div>
<div class="t tab" style="left:737.5px;top:65.7px;font-size:17.5px;letter-spacing:0.02px">Hjälp</div>
<div class="t tab" style="left:847.0px;top:65.7px;font-size:17.5px;letter-spacing:0.15px">Berätta vad du vill göra</div>
<div class="t tab" style="left:1860.0px;top:66.2px;font-size:17.5px;letter-spacing:-0.83px">Dela</div>


<!-- ===== FORMULA/TABS/STATUS ===== -->
<div class="a" style="left:0;top:954px;width:1920px;height:33px;background:#e6e6e6"></div>
<div class="a" style="left:7px;top:246px;width:152px;height:35px;background:#fff;border:1px solid #c6c6c6"></div>
<div class="t" style="left:14.5px;top:257.1px;font-size:17.2px;color:#262626;">C8</div>
<svg style="left:141px;top:260px" width="9" height="6"><path d="M0 0 H8 L4 5 Z" fill="#6a6a6a"/></svg>
<div class="a" style="left:179px;top:255px;width:3px;height:3px;background:#a6a6a6"></div>
<div class="a" style="left:179px;top:261px;width:3px;height:3px;background:#a6a6a6"></div>
<div class="a" style="left:179px;top:267px;width:3px;height:3px;background:#a6a6a6"></div>
<div class="a" style="left:204px;top:246px;width:164px;height:35px;background:#fff;border:1px solid #c6c6c6"></div>
<svg style="left:223px;top:255px" width="18" height="17"><path d="M1.5 1.5 L16 15.5 M16 1.5 L1.5 15.5" stroke="#c2c2c2" stroke-width="2"/></svg>
<svg style="left:276px;top:255px" width="21" height="18"><path d="M1.5 10 L7 15.5 L19.5 2" fill="none" stroke="#c2c2c2" stroke-width="2.6"/></svg>
<div class="t" style="left:330px;top:250px;font-family:'Liberation Serif',serif;font-style:italic;font-weight:bold;font-size:21px;color:#555">f<span style="font-size:18px">x</span></div>
<div class="a" style="left:372px;top:246px;width:1541px;height:35px;background:#fff;border:1px solid #c6c6c6"></div>
<div class="t" style="left:390px;top:255.5px;font-size:18px;color:#262626;">7,5</div>
<svg style="left:1893px;top:260px" width="13" height="10"><path d="M1.5 1.5 L6.5 6.5 L11.5 1.5" fill="none" stroke="#6a6a6a" stroke-width="2.6"/></svg>
<div class="a" style="left:1893px;top:322px;width:24px;height:609px;background:#dadada"></div>
<div class="a" style="left:1892px;top:297px;width:25px;height:25px;background:#fff;border:1px solid #dadada"></div>
<svg style="left:1899px;top:306px" width="12" height="7"><path d="M0 6 H11 L5.5 0 Z" fill="#6a6a6a"/></svg>
<div class="a" style="left:1893px;top:380px;width:24px;height:303px;background:#fff;border:1px solid #c6c6c6"></div>
<div class="a" style="left:1892px;top:930px;width:25px;height:25px;background:#fff;border:1px solid #dadada"></div>
<svg style="left:1899px;top:940px" width="12" height="7"><path d="M0 0 H11 L5.5 6 Z" fill="#6a6a6a"/></svg>
<div class="a" style="left:1889px;top:324px;width:1px;height:630px;background:#ababab"></div>
<div class="a" style="left:0;top:953px;width:1890px;height:1px;background:#ababab"></div>
<div class="a" style="left:0;top:935px;width:39px;height:1px;background:#c6c6c6"></div>
<svg style="left:28px;top:964px" width="8" height="12"><path d="M7 0 V11 L0.5 5.5 Z" fill="#c6c6c6"/></svg>
<svg style="left:63px;top:964px" width="8" height="12"><path d="M0.5 0 V11 L7 5.5 Z" fill="#c6c6c6"/></svg>
<div class="a" style="left:118px;top:953px;width:78px;height:31px;background:#fff;border-left:1px solid #ababab;border-right:1px solid #ababab"></div>
<div class="a" style="left:118px;top:981px;width:78px;height:3px;background:#217346"></div>
<div class="t" style="left:131.3px;top:960.0px;font-size:18.5px;color:#217346;font-weight:bold">Blad1</div>
<svg style="left:234px;top:958px" width="24" height="24"><circle cx="12" cy="12" r="10.5" fill="none" stroke="#c6c6c6" stroke-width="1.3"/><path d="M12 6.5 V17.5 M6.5 12 H17.5" stroke="#c6c6c6" stroke-width="1.6"/></svg>
<div class="a" style="left:1149px;top:962px;width:3px;height:3px;background:#a6a6a6"></div>
<div class="a" style="left:1149px;top:968px;width:3px;height:3px;background:#a6a6a6"></div>
<div class="a" style="left:1149px;top:974px;width:3px;height:3px;background:#a6a6a6"></div>
<div class="a" style="left:1169px;top:957px;width:698px;height:25px;background:#dadada"></div>
<div class="a" style="left:1168px;top:957px;width:25px;height:25px;background:#fff;border:1px solid #dadada"></div>
<svg style="left:1176px;top:963px" width="8" height="13"><path d="M7 0 V12 L0.5 6 Z" fill="#6a6a6a"/></svg>
<div class="a" style="left:1193px;top:957px;width:504px;height:25px;background:#fff;border:1px solid #c6c6c6"></div>
<div class="a" style="left:1866px;top:957px;width:25px;height:25px;background:#fff;border:1px solid #dadada"></div>
<svg style="left:1876px;top:963px" width="8" height="13"><path d="M0.5 0 V12 L7 6 Z" fill="#6a6a6a"/></svg>
<div class="a" style="left:0;top:987px;width:1920px;height:1px;background:#c6c6c6"></div>
<div class="a" style="left:1532px;top:988px;width:45px;height:32px;background:#c8c8c8"></div>
<svg style="left:1544px;top:993px" width="21" height="21"><rect x="0.5" y="0.5" width="19" height="19" fill="none" stroke="#6a6a6a" stroke-width="1"/><path d="M0.5 6.8 H19.5 M0.5 13.2 H19.5 M6.8 0.5 V19.5 M13.2 0.5 V19.5" stroke="#6a6a6a" stroke-width="1"/></svg>
<svg style="left:1589px;top:993px" width="21" height="21"><rect x="0.5" y="0.5" width="19" height="19" fill="none" stroke="#6a6a6a" stroke-width="1"/><rect x="3.5" y="3.5" width="13" height="13" fill="none" stroke="#6a6a6a" stroke-width="1"/><path d="M6 7 H14 M6 10 H14 M6 13 H14" stroke="#6a6a6a" stroke-width="1"/></svg>
<svg style="left:1634px;top:993px" width="21" height="21"><path d="M0.5 0.5 H19.5 V19.5 H0.5 Z M0.5 9.5 H11.5 V0.5 M5.5 0.5 V9.5" fill="none" stroke="#6a6a6a" stroke-width="1"/></svg>
<div class="a" style="left:1673px;top:1002px;width:11px;height:2px;background:#6a6a6a"></div>
<div class="a" style="left:1690px;top:1002px;width:148px;height:2px;background:#a6a6a6"></div>
<div class="a" style="left:1760px;top:995px;width:8px;height:17px;background:#6a6a6a"></div>
<svg style="left:1843px;top:997px" width="13" height="13"><path d="M6 0 V12 M0 6 H12" stroke="#6a6a6a" stroke-width="2"/></svg>
<div class="t" style="left:1869px;top:995.7px;font-size:15.2px;color:#444;">100 %</div>
<!-- ===== SHEET CONTENT ===== -->
<div class="t cell" style="left:293.5px;top:329.9px;font-size:21.4px;letter-spacing:0.08px">Detta urval guide kan användas för både segelbåtar och motorbåtar.</div>
<div class="t cell" style="left:252.5px;top:358.0px;font-size:23.9px;font-style:italic;letter-spacing:0.1px">Tänk på att du inte får sällan max vindstycka på en hamn eller sluss.</div>
<div class="t cell" style="left:188px;top:418.9px;font-size:21.4px;letter-spacing:0.04px">Välj lufttrycket från tabellen i bogpropeller som kommer att användas vid dockning (kgf/m2)</div>
<div class="t cell" style="left:347.5px;top:452.0px;font-size:15.4px;letter-spacing:0.025px">(Till exempel när vindstyrka är i 5 skala, kommer max vindtyrk vara 7,5 (kgf/m2)</div>
<div class="t cell" style="left:43px;top:418.9px">1.</div>
<div class="t cell" style="left:43px;top:679.9px">2.</div>
<div class="t cell" style="left:43px;top:737.9px">3.</div>
<div class="t cell" style="left:43px;top:795.9px">4.</div>
<div class="t cell" style="left:43px;top:853.9px">5.</div>
<div class="t cell" style="left:406px;top:679.9px;font-size:21.4px;letter-spacing:0.07px">Total längd på båten (längd i meter - mått 'A')</div>
<div class="t cell" style="left:309.5px;top:737.9px;font-size:21.4px;letter-spacing:0.03px">Höjd av skrovet ovanför vattenlinjen (snitt längd i meter - mått 'B')</div>
<div class="t cell" style="left:244.5px;top:795.9px;font-size:21.4px;letter-spacing:-0.01px">Reduktionsfaktor på 0,75 till 1 (0,75 lätta kryssare, 1 tung förskjutning hög vind)</div>
<div class="t cell" style="left:260.5px;top:853.9px;font-size:21.4px;letter-spacing:0.045px">Hur långt från fören är bogpropeller installerad? ( Avstånd i meter - mått 'C')</div>
<div class="t cell" style="left:469px;top:911.9px;font-size:21.4px;font-weight:bold;letter-spacing:-0.12px">Beräknat bogpropeller storlek</div>


<!-- ===== TABLE IMAGE ===== -->
<div class="a" style="left:344px;top:486px;width:258px;height:29px;background:#ffc000"></div>
<div class="a" style="left:603px;top:486px;width:287px;height:29px;background:#c0c0c0"></div>
<div class="a" style="left:344px;top:486px;width:1px;height:175px;background:#b8b8b8"></div>
<div class="a" style="left:601px;top:486px;width:2px;height:175px;background:#111"></div>
<div class="a" style="left:344px;top:514px;width:546px;height:2px;background:#111"></div>
<div class="a" style="left:344px;top:543px;width:546px;height:2px;background:#111"></div>
<div class="a" style="left:344px;top:572px;width:546px;height:2px;background:#111"></div>
<div class="a" style="left:344px;top:601px;width:546px;height:2px;background:#111"></div>
<div class="a" style="left:344px;top:630px;width:546px;height:2px;background:#111"></div>
<div class="a" style="left:344px;top:659px;width:546px;height:2px;background:#111"></div>
<div class="t" style="left:274.5px;width:400px;top:489.4px;text-align:center;font-size:25px;font-weight:bold;color:#000;letter-spacing:1.62px;text-indent:1.62px;transform:scaleX(1.08)">Vindstyrka (m/s)</div>
<div class="t" style="left:546.9px;width:400px;top:489.4px;text-align:center;font-size:25px;font-weight:bold;color:#000;letter-spacing:1.67px;text-indent:1.67px;transform:scaleX(1.08)">Vindtryck (kgf/m2)</div>
<div class="t" style="left:268.8px;width:400px;top:517.8px;text-align:center;font-size:25px;color:#2b2b2b;letter-spacing:1.11px;text-indent:1.11px;transform:scaleX(1.08)">5,5 - 7,9</div>
<div class="t" style="left:545.5px;width:400px;top:517.8px;text-align:center;font-size:25px;font-weight:bold;color:#000;letter-spacing:0.71px;text-indent:0.71px;transform:scaleX(1.08)">2,0 till 4,1</div>
<div class="t" style="left:273.2px;width:400px;top:547px;text-align:center;font-size:25px;color:#2b2b2b;letter-spacing:1.10px;text-indent:1.10px;transform:scaleX(1.08)">8,0 - 10,7</div>
<div class="t" style="left:546.5px;width:400px;top:547px;text-align:center;font-size:25px;font-weight:bold;color:#000;letter-spacing:0.87px;text-indent:0.87px;transform:scaleX(1.08)">4,2 till 7,5</div>
<div class="t" style="left:273.7px;width:400px;top:576.3px;text-align:center;font-size:25px;color:#2b2b2b;letter-spacing:1.06px;text-indent:1.06px;transform:scaleX(1.08)">10,8 - 13,8</div>
<div class="t" style="left:547.4px;width:400px;top:576.3px;text-align:center;font-size:25px;font-weight:bold;color:#000;letter-spacing:0.92px;text-indent:0.92px;transform:scaleX(1.08)">7,7 till 12,5</div>
<div class="t" style="left:268.0px;width:400px;top:605.1px;text-align:center;font-size:25px;color:#2b2b2b;letter-spacing:0.83px;text-indent:0.83px;transform:scaleX(1.08)">13,9 - 17,1</div>
<div class="t" style="left:547.6px;width:400px;top:605.1px;text-align:center;font-size:25px;font-weight:bold;color:#000;letter-spacing:0.84px;text-indent:0.84px;transform:scaleX(1.08)">12,7 till 19,2</div>
<div class="t" style="left:273.7px;width:400px;top:633.8px;text-align:center;font-size:25px;color:#2b2b2b;letter-spacing:1.06px;text-indent:1.06px;transform:scaleX(1.08)">17,2 - 20,7</div>
<div class="t" style="left:547.6px;width:400px;top:633.8px;text-align:center;font-size:25px;font-weight:bold;color:#000;letter-spacing:0.84px;text-indent:0.84px;transform:scaleX(1.08)">19,4 till 28,2</div>
<!-- yellow cells -->
<div class="a" style="left:1167px;top:413px;width:87px;height:30px;background:#ffff00"></div>
<div class="a" style="left:1167px;top:674px;width:87px;height:30px;background:#ffff00"></div>
<div class="a" style="left:1167px;top:732px;width:87px;height:30px;background:#ffff00"></div>
<div class="a" style="left:1167px;top:790px;width:87px;height:30px;background:#ffff00"></div>
<div class="a" style="left:1167px;top:848px;width:87px;height:30px;background:#ffff00"></div>
<div class="a" style="left:1167px;top:906px;width:87px;height:30px;background:#ffcc00"></div>
<!-- selection -->
<div class="a" style="left:1166px;top:412px;width:89px;height:32px;border:2px solid #217346;box-shadow:inset 0 0 0 1px #fff"></div>
<div class="a" style="left:1249px;top:438px;width:8px;height:8px;background:#217346;border:1px solid #fff"></div>

<div class="t cell" style="left:1167px;top:418.9px;width:87px;text-align:center">7,5</div>
<div class="t cell" style="left:1257px;top:418.9px">kgf/m2</div>
<div class="t cell" style="left:1167px;top:679.9px;width:87px;text-align:center">11</div>
<div class="t cell" style="left:1257px;top:679.9px">m</div>
<div class="t cell" style="left:1167px;top:737.9px;width:87px;text-align:center">1,5</div>
<div class="t cell" style="left:1257px;top:737.9px">m</div>
<div class="t cell" style="left:1167px;top:795.9px;width:87px;text-align:center">0,8</div>
<div class="t cell" style="left:1167px;top:853.9px;width:87px;text-align:center">0,5</div>
<div class="t cell" style="left:1257px;top:853.9px">m</div>
<div class="t cell" style="left:1167px;top:911.9px;width:87px;text-align:center;font-weight:bold">52</div>
<div class="t cell" style="left:1257px;top:911.9px;font-weight:bold">kgf</div>


<!-- ===== TASKBAR ===== -->
<svg style="left:23px;top:1037px" width="26" height="26">
<path d="M0.5 3.6 L10.5 2.2 V12 H0.5 Z M12 2 L25 0.2 V12 H12 Z M0.5 13.5 H10.5 V23.3 L0.5 21.9 Z M12 13.5 H25 V25.3 L12 23.5 Z" fill="#fff"/>
</svg>
<svg style="left:95px;top:1037px" width="27" height="27">
<circle cx="16" cy="9.5" r="8.3" fill="none" stroke="#fff" stroke-width="1.5"/>
<path d="M10 15.5 L1 24.5" stroke="#fff" stroke-width="1.6"/>
</svg>
<svg style="left:167px;top:1037px" width="27" height="26">
<path d="M0.5 2 V0.5 H16 V2 M0.5 21.5 V23 H16 V21.5" fill="none" stroke="#fff" stroke-width="1.2"/>
<rect x="0.5" y="5.5" width="15.5" height="12.5" fill="none" stroke="#fff" stroke-width="1.3"/>
<path d="M22 0 V24" stroke="#fff" stroke-width="1.3"/><rect x="20" y="7.5" width="4" height="4" fill="#fff"/>
</svg>
<svg style="left:241px;top:1033px" width="32" height="33">
<path d="M2 14 Q4 2 17 1.5 Q31 2 31 17 V19 H10 Q10.5 26 18 26.5 Q24 27 29 24 V30.5 Q24 33 17 32.5 Q4 31.5 3.5 20 Q4 12 11 9 Q8 12.5 8 15 H23 Q23 8 17 7.5 Q8 7.5 2 14 Z" fill="#1976d6"/>
</svg>
<svg style="left:315px;top:1033px" width="34" height="34" viewBox="0 0 34 34">
<circle cx="17" cy="17" r="16.5" fill="#db4437"/>
<path d="M17 17 L2.7 25.25 A16.5 16.5 0 0 1 3 8.5 Z" fill="#0f9d58"/>
<path d="M17 17 L31.3 8.75 A16.5 16.5 0 0 0 17 0.5 L6 6 Z" fill="#db4437"/>
<path d="M17 17 L2.7 25.25 A16.5 16.5 0 0 0 17 33.5 L24 23 Z" fill="#0f9d58"/>
<path d="M17 17 L31.3 8.75 A16.5 16.5 0 0 1 17 33.5 Z" fill="#ffcd40"/>
<circle cx="17" cy="17" r="7.6" fill="#fff"/><circle cx="17" cy="17" r="5.8" fill="#4285f4"/>
</svg>
<svg style="left:390px;top:1036px" width="34" height="29">
<path d="M1 3 Q1 1.5 2.5 1.5 H11 L13 4 H31 Q32.5 4 32.5 5.5 V25.5 Q32.5 27 31 27 H2.5 Q1 27 1 25.5 Z" fill="#f8d775"/>
<rect x="2" y="2.5" width="8" height="2" fill="#fff"/><rect x="3" y="3" width="5" height="1" fill="#3da6e0"/>
<path d="M8 16 H26 V27.5 H22.5 V21 H11.5 V27.5 H8 Z" fill="#33a7e6"/>
</svg>
<svg style="left:463px;top:1031px" width="37" height="36">
<path d="M12 9 Q12 1.5 18.5 1.5 Q25 1.5 25 9" fill="none" stroke="#fff" stroke-width="2"/>
<path d="M14.5 9 Q14.5 4 18.5 4 Q22.5 4 22.5 9" fill="none" stroke="#fff" stroke-width="1.2"/>
<rect x="1" y="9" width="35" height="26" rx="1.5" fill="#fff"/>
<rect x="10.5" y="14" width="7.5" height="7.5" fill="#f25022"/><rect x="19" y="14" width="7.5" height="7.5" fill="#7fba00"/>
<rect x="10.5" y="22.5" width="7.5" height="7.5" fill="#00a4ef"/><rect x="19" y="22.5" width="7.5" height="7.5" fill="#ffb900"/>
</svg>
<svg style="left:540px;top:1033px" width="34" height="34">
<rect x="14" y="5.5" width="19" height="23" fill="#fff" stroke="#d24726" stroke-width="1.5"/>
<path d="M20 9 A5 5 0 1 0 25 14 H20 Z" fill="#d24726"/><path d="M21.5 7.5 A5 5 0 0 1 26.5 12.5 H21.5 Z" fill="#d24726"/>
<path d="M18 20 H30 M18 23 H30" stroke="#d24726" stroke-width="1.2"/>
<path d="M1 5 L19 1 V33 L1 29 Z" fill="#d24726"/>
<text x="4.5" y="23.5" font-family="Liberation Sans" font-weight="bold" font-size="15" fill="#fff">P</text>
</svg>
<svg style="left:613px;top:1031px" width="37" height="38">
<rect x="0.5" y="0.5" width="36" height="36" rx="2.5" fill="#fff"/>
<path d="M9 9 Q6 12 9 19 Q13 27 21 30 Q26 32 28 29 L29 27.5 L24 23.5 L21.5 25 Q17 22.5 14 17 L16 14.5 L12 9 Z" fill="#1f5f8b"/>
<circle cx="22" cy="15" r="3" fill="none" stroke="#1f5f8b" stroke-width="1.6"/>
<path d="M17 7 Q26 6 29 15 M16 3.5 Q29 3 32.5 16" fill="none" stroke="#1f5f8b" stroke-width="2"/>
</svg>
<div class="a" style="left:671px;top:1020px;width:66px;height:60px;background:#40403e"></div>
<div class="a" style="left:737px;top:1020px;width:7px;height:60px;background:#2b2b29"></div>
<svg style="left:690px;top:1033px" width="34" height="34">
<rect x="14.5" y="4" width="18" height="25" fill="#fff" stroke="#1e7145" stroke-width="1.2"/>
<path d="M19 8 H31 M19 12 H31 M19 16 H31 M19 20 H31 M19 24 H31 M24 5 V28" stroke="#1e7145" stroke-width="1.2"/>
<path d="M1 5 L19 1 V33 L1 29 Z" fill="#1e7145"/>
<path d="M5.5 10.5 L13 23 M13 10.5 L5.5 23" stroke="#fff" stroke-width="2.6"/>
</svg>
<svg style="left:765px;top:1033px" width="34" height="34">
<rect x="16" y="8" width="17" height="17" fill="#0072c6"/>
<path d="M17 10 L24.5 17 L32 10 V23.5 H17 Z" fill="#fff"/><path d="M17 10 L24.5 17 L32 10" fill="none" stroke="#0072c6" stroke-width="1.2"/>
<path d="M1 5 L19 1 V33 L1 29 Z" fill="#0072c6"/>
<ellipse cx="9.5" cy="17" rx="4.8" ry="6" fill="none" stroke="#fff" stroke-width="2.6"/>
</svg>
<div class="a" style="left:302px;top:1077px;width:61px;height:3px;background:#76b9ed"></div>
<div class="a" style="left:377px;top:1077px;width:61px;height:3px;background:#76b9ed"></div>
<div class="a" style="left:527px;top:1077px;width:61px;height:3px;background:#76b9ed"></div>
<div class="a" style="left:602px;top:1077px;width:61px;height:3px;background:#76b9ed"></div>
<div class="a" style="left:671px;top:1077px;width:73px;height:3px;background:#76b9ed"></div>
<div class="a" style="left:752px;top:1077px;width:61px;height:3px;background:#76b9ed"></div>
<svg style="left:1534px;top:1037px" width="25" height="25">
<circle cx="16" cy="5.5" r="4" fill="none" stroke="#fff" stroke-width="1.3"/>
<path d="M10.5 13.5 Q12 10 16 10 Q21.5 10 22.5 16" fill="none" stroke="#fff" stroke-width="1.3"/>
<circle cx="8" cy="12" r="4" fill="none" stroke="#fff" stroke-width="1.3"/>
<path d="M1 23.5 Q2 16.5 8 16.5 Q14 16.5 15 23.5" fill="none" stroke="#fff" stroke-width="1.3"/>
</svg>
<svg style="left:1590px;top:1044px" width="21" height="12"><path d="M1 11 L10 2 L19 11" fill="none" stroke="#fff" stroke-width="1.3"/></svg>
<svg style="left:1624px;top:1043px" width="26" height="15">
<rect x="0.75" y="0.75" width="21.5" height="12.5" fill="none" stroke="#fff" stroke-width="1.4"/>
<rect x="3" y="3" width="5.5" height="8" fill="#fff"/><rect x="22.5" y="4.5" width="2" height="5" fill="#fff"/>
</svg>
<svg style="left:1663px;top:1041px" width="21" height="20">
<path d="M1 18 A17 17 0 0 1 18 1 M4.5 18 A13.5 13.5 0 0 1 18 4.5 M8 18 A10 10 0 0 1 18 8 M11.5 18 A6.5 6.5 0 0 1 18 11.5" fill="none" stroke="#fff" stroke-width="1.1"/>
<circle cx="17.5" cy="17.5" r="1.6" fill="#fff"/>
</svg>
<svg style="left:1696px;top:1040px" width="25" height="21">
<path d="M1 7 H5 L11 1.5 V19.5 L5 14 H1 Z" fill="none" stroke="#fff" stroke-width="1.2"/>
<path d="M14 7.5 Q16 10.5 14 13.5 M17 5 Q20.5 10.5 17 16 M20 2.5 Q25 10.5 20 18.5" fill="none" stroke="#fff" stroke-width="1.2"/>
</svg>
<div class="t" style="left:1762.5px;top:1029.6px;font-size:16.8px;color:#fff;letter-spacing:0.2px">12:49</div>
<div class="t" style="left:1736.7px;top:1056.7px;font-size:17.8px;color:#fff;letter-spacing:0.3px">2019-02-28</div>
<svg style="left:1856px;top:1037px" width="45" height="38">
<path d="M1.5 1.5 H26.5 V19.5 H14 L9 25 V19.5 H1.5 Z" fill="#fff"/>
<path d="M5.5 6.5 H22.5 M5.5 10.5 H22.5 M5.5 14.5 H18" stroke="#1c1c1c" stroke-width="1.2"/>
<circle cx="25" cy="24.5" r="11.5" fill="#1c1c1c" stroke="#777" stroke-width="1"/>
</svg>
<div class="t" style="left:1874.5px;top:1054.7px;font-size:17.5px;color:#fff;">3</div>
<div class="a" style="left:1912px;top:1020px;width:1px;height:60px;background:#8a8a8a"></div>
</body></html>
